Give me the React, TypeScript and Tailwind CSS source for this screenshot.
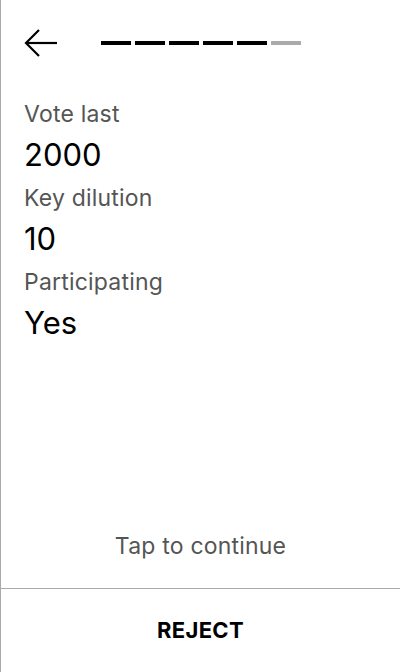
import React from "react";

export default function App() {
  const bars = [true, true, true, true, true, false];
  return (
    <div
      className="h-[672px] w-[400px] bg-white border-l border-[#aaaaaa] flex flex-col"
      style={{ fontFamily: "Inter, 'Noto Sans', sans-serif" }}
    >
      <div className="flex items-center h-[86px] pl-[23px]">
        <svg width="34" height="28" viewBox="0 0 34 28" fill="none" stroke="black" strokeWidth="2.2">
          <path d="M2 14 H33" />
          <path d="M15 1 L2 14 L15 27" />
        </svg>
        <div className="flex gap-[4px] ml-[43px]">
          {bars.map((b, i) => (
            <div key={i} className={b ? "w-[30px] h-[4px] bg-black" : "w-[30px] h-[4px] bg-[#aaaaaa]"} />
          ))}
        </div>
      </div>
      <div className="flex flex-col px-[23px] pt-[12px]">
        <div className="text-[23px] leading-[33px] text-[#555555] tracking-[0.2px]">Vote last</div>
        <div className="text-[31px] leading-[47px] pb-[4px] text-black">2000</div>
        <div className="text-[23px] leading-[33px] text-[#555555] tracking-[0.2px]">Key dilution</div>
        <div className="text-[31px] leading-[47px] pb-[4px] text-black">10</div>
        <div className="text-[23px] leading-[33px] text-[#555555] tracking-[0.2px]">Participating</div>
        <div className="text-[31px] leading-[47px] pb-[4px] text-black">Yes</div>
      </div>
      <div className="flex-1" />
      <div className="text-center text-[23px] text-[#555555] pb-[25px] tracking-[0.2px]">Tap to continue</div>
      <div className="border-t border-[#aaaaaa] h-[84px] flex items-center justify-center">
        <span className="text-[22px] font-bold text-black tracking-[0.3px]">REJECT</span>
      </div>
    </div>
  );
}
